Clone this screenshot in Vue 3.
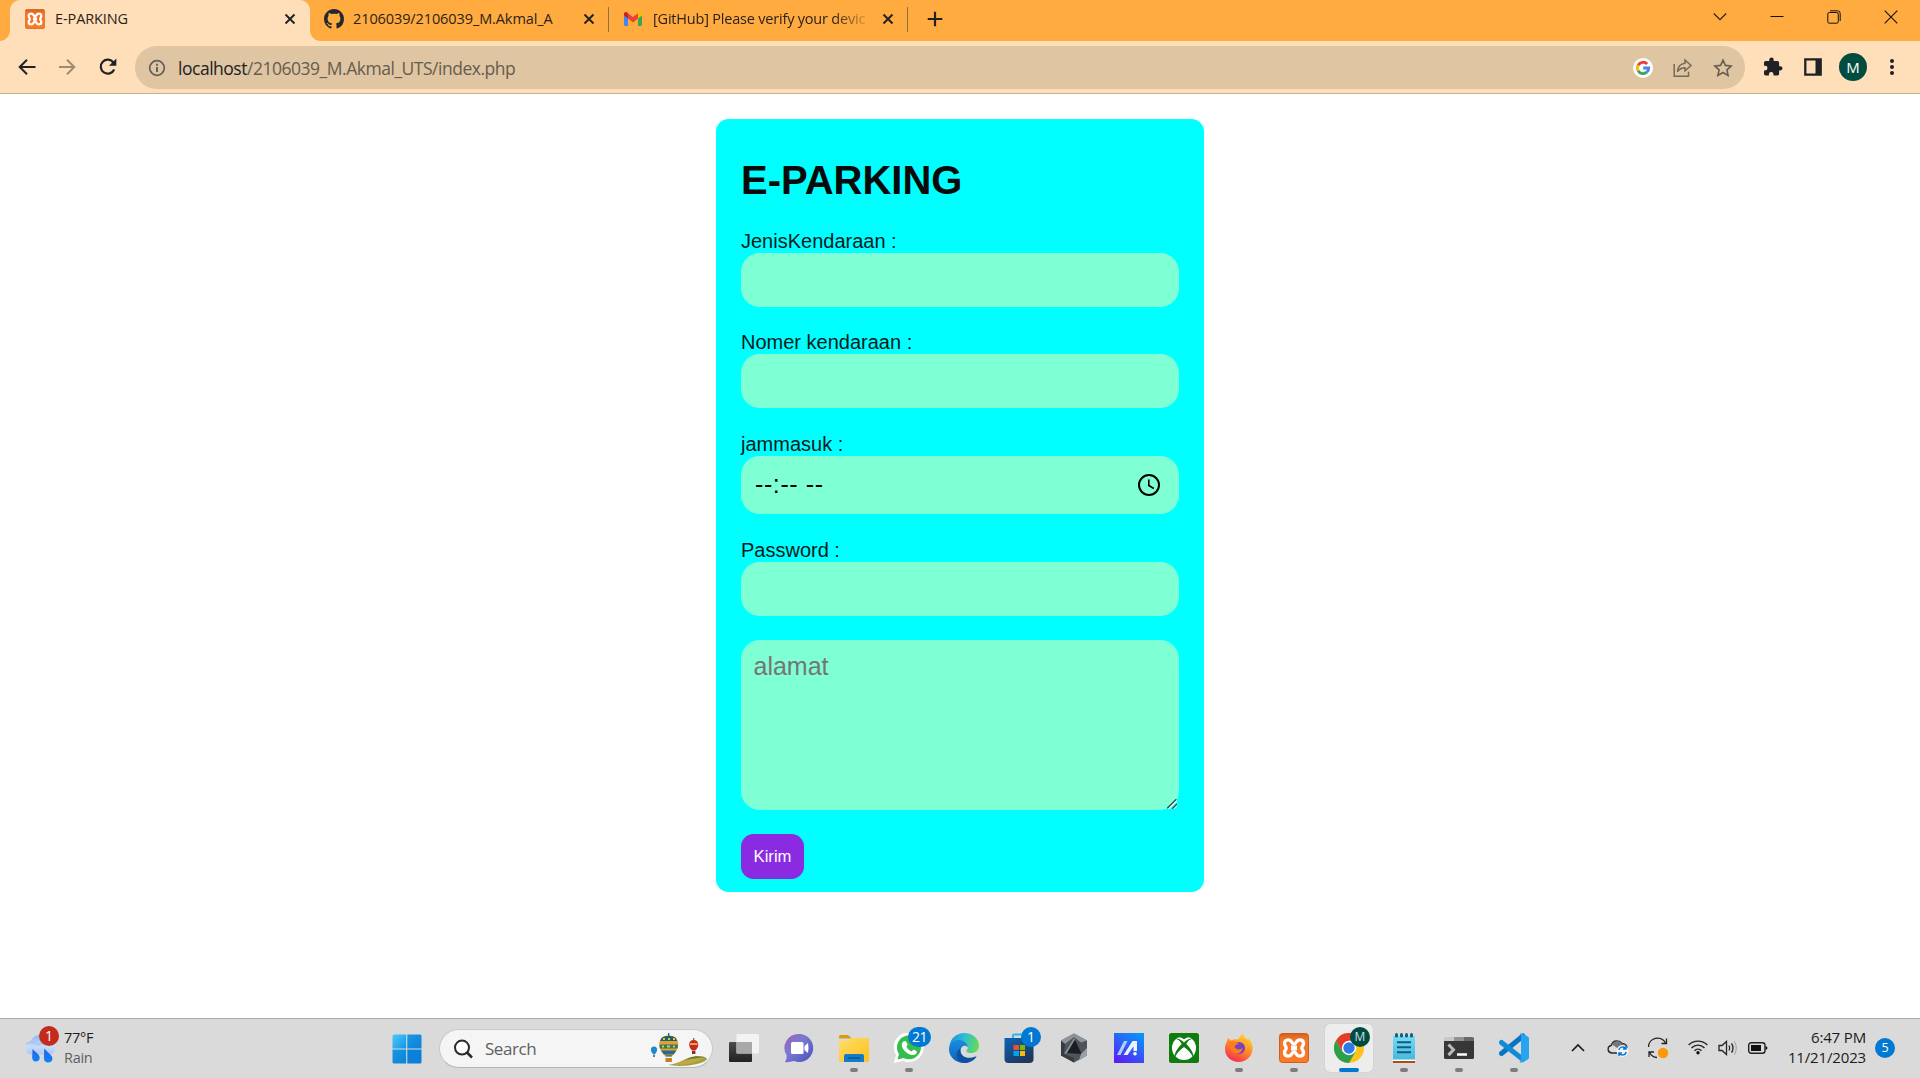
<script setup>
const tabs = [
  { id: 'xampp', title: 'E-PARKING', cls: 't1' },
  { id: 'github', title: '2106039/2106039_M.Akmal_A', cls: 't2' },
  { id: 'gmail', title: '[GitHub] Please verify your devic', cls: 't3' },
]
const fields = [
  { label: 'JenisKendaraan :', type: 'text', cls: 'f1' },
  { label: 'Nomer kendaraan :', type: 'text', cls: 'f2' },
  { label: 'jammasuk :', type: 'time', cls: 'f3' },
  { label: 'Password :', type: 'password', cls: 'f4' },
]
</script>

<template>
  <div class="screen">
    <svg width="0" height="0" class="defs">
      <defs>
        <linearGradient id="orange" x1="0" y1="0" x2="0" y2="1"><stop offset="0" stop-color="#d4601d" /><stop offset=".2" stop-color="#f0762b" /><stop offset="1" stop-color="#fb7a24" /></linearGradient>
        <symbol id="xampp" viewBox="0 0 30 30">
          <rect x=".5" y=".5" width="29" height="29" rx="3" fill="url(#orange)" stroke="#c9601f" />
          <path d="M9.500 6.800c-2.700 0-4 1.700-4 3.700 0 2.200 1.700 2.700 1.700 4.500s-1.700 2.300-1.700 4.500c0 2 1.300 3.700 4 3.700 3.500 0 3-4.200 5.500-4.200s2 4.200 5.500 4.200c2.700 0 4-1.700 4-3.700 0-2.200-1.700-2.700-1.700-4.500s1.700-2.300 1.700-4.500c0-2-1.300-3.700-4-3.700-3.500 0-3 4.200-5.500 4.200s-2-4.200-5.500-4.200z" fill="none" stroke="#fff" stroke-width="3.300" stroke-linejoin="round" />
          <path d="M12 15h6" stroke="#fff" stroke-width="5" />
        </symbol>
        <symbol id="github" viewBox="0 0 16 16"><path fill="#24292f" d="M8 0C3.580 0 0 3.580 0 8c0 3.540 2.290 6.530 5.470 7.590.4.070.55-.17.55-.38 0-.19-.010-.82-.010-1.490-2.010.37-2.530-.49-2.690-.94-.090-.23-.48-.94-.82-1.130-.28-.15-.68-.52-.010-.53.63-.010 1.080.58 1.230.82.72 1.210 1.870.87 2.330.66.070-.52.28-.87.510-1.070-1.780-.2-3.640-.89-3.640-3.950 0-.87.31-1.590.82-2.150-.080-.2-.36-1.020.080-2.120 0 0 .67-.21 2.200.82.640-.18 1.320-.27 2-.27s1.360.090 2 .27c1.530-1.040 2.200-.82 2.200-.82.440 1.100.160 1.920.080 2.120.510.56.82 1.270.82 2.150 0 3.070-1.870 3.750-3.650 3.950.290.25.540.73.540 1.480 0 1.070-.010 1.930-.010 2.200 0 .210.150.460.550.380A8.010 8.010 0 0 0 16 8c0-4.420-3.580-8-8-8z" /></symbol>
        <symbol id="gmail" viewBox="0 0 20 20">
          <path d="M1 6v9.500Q1 17 2.500 17H5V9z" fill="#4285f4" /><path d="M15 9v8h2.500q1.500 0 1.500-1.500V6z" fill="#34a853" />
          <path d="M15 4.500V9.600L19 6.600V5c0-2-2.200-2.600-3.500-1.600z" fill="#fbbc04" /><path d="M5 9.600V4.200l5 3.800 5-3.800v5.400l-5 3.800z" fill="#ea4335" /><path d="M1 5v1.600l4 3V4.200l-.7-.6C3 2.500 1 3.200 1 5z" fill="#c5221f" />
        </symbol>
      </defs>
    </svg>

    <header class="strip">
      <div v-for="t in tabs" :key="t.id" class="tab" :class="t.cls">
        <svg class="fav" width="20" height="20"><use :href="'#' + t.id" /></svg>
        <span class="title">{{ t.title }}</span>
        <svg class="x" width="12" height="12" viewBox="0 0 12 12"><path d="M1.500 1.500l9 9M10.500 1.500l-9 9" stroke="#202124" stroke-width="1.900" /></svg>
      </div>
      <svg class="plus" width="16" height="16" viewBox="0 0 16 16"><path d="M8 .7v14.600M.7 8h14.600" stroke="#202124" stroke-width="2.200" /></svg>
      <div class="winbtns">
        <svg width="14" height="14" viewBox="0 0 14 14"><path d="M.8 3.500l6.200 6.200 6.200-6.200" fill="none" stroke="#2b2010" stroke-width="1.100" /></svg>
        <svg width="14" height="14" viewBox="0 0 14 14"><path d="M.5 6.500h13" stroke="#111" /></svg>
        <svg width="14" height="14" viewBox="0 0 14 14"><g fill="none" stroke="#111"><rect x=".8" y="2.500" width="10.500" height="10.700" rx="1.500" /><path d="M3 .8h7.500q2.700 0 2.700 2.700v7.500" /></g></svg>
        <svg width="14" height="14" viewBox="0 0 14 14"><path d="M.7.7l12.600 12.600M13.300.7L.7 13.300" stroke="#111" stroke-width="1.100" /></svg>
      </div>
    </header>

    <nav class="toolbar">
      <svg class="nav" width="20" height="20" viewBox="0 0 20 20"><path d="M18.500 10H3M10 2.700L2.700 10l7.300 7.300" fill="none" stroke="#202124" stroke-width="2" /></svg>
      <svg class="nav" width="20" height="20" viewBox="0 0 20 20"><path d="M2 10h15M10 2.700l7.300 7.300-7.300 7.300" fill="none" stroke="#a08b72" stroke-width="2" /></svg>
      <svg class="nav" width="20" height="20" viewBox="0 0 20 20"><path d="M16.200 12.500A7 7 0 1 1 15.500 5.600" fill="none" stroke="#202124" stroke-width="2.200" /><path d="M18.300 1.600v7.200H11z" fill="#202124" /></svg>
      <div class="omni">
        <svg class="info" width="18" height="18" viewBox="0 0 18 18"><circle cx="9" cy="9" r="7.300" fill="none" stroke="#5f5f60" stroke-width="1.700" /><path d="M9 8v5M9 4.800v1.900" stroke="#5f5f60" stroke-width="1.900" /></svg>
        <span class="url"><b>localhost</b>/2106039_M.Akmal_UTS/index.php</span>
        <svg class="goog" width="20" height="20" viewBox="0 0 20 20"><circle cx="10" cy="10" r="10" fill="#fff" /><g fill="none" stroke-width="2.900"><path d="M14.200 6.100A5.700 5.700 0 0 0 5.100 7.200" stroke="#ea4335" /><path d="M5.100 7.200a5.700 5.700 0 0 0 0 5.600" stroke="#fbbc05" /><path d="M5.100 12.800a5.700 5.700 0 0 0 8.700 1.400" stroke="#34a853" /><path d="M13.800 14.200A5.700 5.700 0 0 0 15.700 10H10.200" stroke="#4285f4" /></g></svg>
        <svg class="share" width="20" height="20" viewBox="0 0 20 20"><g fill="none" stroke="#75695a" stroke-width="1.500"><path d="M1.200 6v12.200h14.300v-4.500" /><path d="M12 2l6 5.500-6 5.300V9.700c-3.500 0-5.600 1-7.500 4C4.800 9 7.300 5.700 12 5.200z" /></g></svg>
        <svg class="star" width="20" height="20" viewBox="0 0 20 20"><path d="M10 2.200l2.400 5.200 5.700.6-4.200 3.800 1.200 5.600-5.100-2.900-5.100 2.900 1.200-5.600L1.900 8l5.700-.6z" fill="none" stroke="#665e53" stroke-width="1.600" /></svg>
      </div>
      <svg class="puzzle" width="20" height="20" viewBox="0 0 20 20"><path fill="#202124" d="M17.400 9.200h-1.300V5.600c0-.9-.7-1.700-1.700-1.700h-3.700V2.700a2.200 2.200 0 0 0-4.400 0v1.200H2.700C1.800 3.900 1 4.700 1 5.600v3.200h1.200a2.300 2.300 0 0 1 0 4.600H1v3.400c0 .9.800 1.700 1.700 1.700h3.200v-1.200a2.300 2.300 0 0 1 4.600 0v1.200h3.900c1 0 1.700-.8 1.700-1.700v-3.400h1.300a2.100 2.100 0 0 0 0-4.200z" /></svg>
      <svg class="panel" width="18" height="18" viewBox="0 0 18 18"><path d="M1.300 1.300h15.400v15.400H1.300z" fill="none" stroke="#202124" stroke-width="2.300" /><path d="M11.500 1H17v16h-5.500z" fill="#202124" /></svg>
      <span class="avatar">M</span>
      <svg class="dots" width="6" height="18" viewBox="0 0 6 18"><circle cx="3" cy="3" r="2" /><circle cx="3" cy="9" r="2" /><circle cx="3" cy="15" r="2" /></svg>
    </nav>

    <main class="page">
      <form class="card" @submit.prevent>
        <h1>E-PARKING</h1>
        <div v-for="f in fields" :key="f.label" class="field" :class="f.cls">
          <label>{{ f.label }}</label>
          <div v-if="f.type === 'time'" class="input time">
            <span>--:-- --</span>
            <svg width="24" height="24" viewBox="0 0 24 24"><circle cx="12" cy="12" r="10" fill="none" stroke="#000" stroke-width="2" /><path d="M11.800 6.500v6l5 3" fill="none" stroke="#000" stroke-width="1.600" /></svg>
          </div>
          <input v-else class="input" :type="f.type" />
        </div>
        <div class="area">
          <textarea placeholder="alamat"></textarea>
          <svg class="grip" width="10" height="10" viewBox="0 0 10 10"><path d="M1.500 10L10 1.500M6.500 10L10 6.500" stroke="#fff" stroke-width="1.300" /><path d="M.3 9.300L9.300.3M5.300 9.700L10 5" stroke="#2f4f45" stroke-width="1.400" /></svg>
        </div>
        <button>Kirim</button>
      </form>
    </main>

    <footer class="taskbar">
      <div class="weather">
        <svg width="32" height="30" viewBox="0 0 32 30">
          <defs>
            <linearGradient id="cl" x1="0" y1="0" x2="0" y2="1"><stop offset="0" stop-color="#8fb5f5" /><stop offset=".6" stop-color="#c8dcfb" /><stop offset="1" stop-color="#a9c6f5" /></linearGradient>
            <linearGradient id="dr" x1="0" y1="0" x2="0" y2="1"><stop offset="0" stop-color="#2b62dd" /><stop offset="1" stop-color="#0a84ff" /></linearGradient>
          </defs>
          <path d="M7 20.500a6.200 6.200 0 0 1-1-12C8 3 12 1 16 1c5 0 8 4 8.500 8 4 0 6.500 2.500 6.500 5.700s-2 5.800-5.500 5.800z" fill="url(#cl)" />
          <path d="M2 10c4-3 8-2 12 1 4-3 11-2 15-.5" stroke="#9dbcf3" fill="none" />
          <path d="M8.500 15l5.800 5.500c3 3.500.7 7-2.500 7-2.500 0-3.700-1.800-3.600-4.200zM20.200 14.500l7 7c2.800 3.500.6 7-3 7-2.700 0-4.300-1.800-4.300-4.300z" fill="url(#dr)" />
        </svg>
        <span class="badge red">1</span>
        <div class="wtext"><div>77°F</div><div class="dim">Rain</div></div>
      </div>
      <svg class="start" width="30" height="30" viewBox="0 0 30 30"><defs><linearGradient id="win" x1="0" y1="0" x2="1" y2="1"><stop offset="0" stop-color="#4cc9fc" /><stop offset="1" stop-color="#1495e2" /></linearGradient><linearGradient id="win2" x1="0" y1="0" x2="1" y2="1"><stop offset="0" stop-color="#22a1e8" /><stop offset="1" stop-color="#0279d4" /></linearGradient></defs><path d="M.5 2Q.5.500 2 .5h12.200v14H.5z" fill="url(#win)" /><path d="M15.300.5H28q1.500 0 1.500 1.500v12.500H15.300zM.5 15.500h13.700v14H2q-1.500 0-1.500-1.500z" fill="url(#win2)" /><path d="M15.300 15.500h14.200V28q0 1.500-1.500 1.500H15.300z" fill="#0a80d8" /></svg>
      <div class="search">
        <svg width="20" height="20" viewBox="0 0 20 20"><circle cx="9" cy="8.600" r="7" fill="#fff" stroke="#292929" stroke-width="2" /><path d="M14 13.500l5 5" stroke="#292929" stroke-width="2.500" /></svg>
        <span>Search</span>
        <svg class="art" width="58" height="34" viewBox="0 0 58 34">
          <path d="M18 32c12-1 18-8 28-9 6 0 11 1 11 3-2 4-16 7-28 7z" fill="#9ba044" /><path d="M26 31c8-3 13-6 29-6-8 4-16 7-29 7z" fill="#c9a53f" /><path d="M35 27c6-4 12-4 20-3-8 1-12 1-20 3z" fill="#567b35" />
          <path d="M4 13.500c4 0 4 5 .8 7.500H3.200C0 18.500 0 13.500 4 13.500z" fill="#1e88c9" /><path d="M3.200 21.500h1.600V24H3.200z" fill="#1d70a5" />
          <path d="M18.700 2.500c12 0 12 14 3.300 20.500h-6.600C6.700 16.500 6.700 2.500 18.700 2.500z" fill="#e7a12a" /><path d="M12 4.500q6.700-3.500 13.400 0l2 3.500H10z" fill="#17617b" /><path d="M9.500 11.500h18.400l-.3 4H9.800z" fill="#297b6b" /><path d="M11 17.500h15.400l-3 4h-9.400z" fill="#1b6e97" /><path d="M12 13.500h2m3 0h3m3 0h2M13 6h2m3 0h2m3 0h2" stroke="#f3c02e" stroke-width="2" /><path d="M18.700 0v3M15.500 23h6.400M16 26h5.500" stroke="#164b5c" stroke-width="1.200" /><path d="M15.500 25h6.400v4h-6.400z" fill="#c77e21" />
          <path d="M43.700 7c6 0 5.500 7 1.700 10.500h-3.400C38.200 14 37.700 7 43.700 7z" fill="#c22c27" /><path d="M40 11h7.500" stroke="#f0a32d" stroke-width="2" /><path d="M42 18h3.400v3H42z" fill="#8a2b25" /><path d="M43.700 5v2" stroke="#8a2b25" />
        </svg>
      </div>

      <div class="apps">
        <div class="app"><svg viewBox="0 0 30 30"><defs><linearGradient id="tv" x1="0" y1="0" x2="0" y2="1"><stop offset="0" stop-color="#4a4a4a" /><stop offset="1" stop-color="#222" /></linearGradient></defs><rect x="0" y="9" width="23" height="20" rx="1" fill="url(#tv)" /><rect x="7.500" y="1" width="22.500" height="19.500" rx="1" fill="#f5f5f5" fill-opacity=".9" /><path d="M7.500 9H23v11.500H7.500z" fill="#a8a8a8" /></svg></div>
        <div class="app"><svg viewBox="0 0 30 30"><defs><linearGradient id="ch" x1="0" y1="0" x2="1" y2="1"><stop offset="0" stop-color="#9b61b0" /><stop offset=".4" stop-color="#7d79d2" /><stop offset="1" stop-color="#4650bd" /></linearGradient></defs><path d="M15 1a14 14 0 1 1-5 27q-5 1.500-9 1 1.800-2.500 1.700-6.500A14 14 0 0 1 15 1z" fill="url(#ch)" /><rect x="7" y="9" width="12.500" height="12" rx="1.500" fill="#fff" /><path d="M20.500 13l3.500-3q1 5 0 10l-3.500-3z" fill="#fff" /></svg></div>
        <div class="app run"><svg viewBox="0 0 30 30"><defs><linearGradient id="fo" x1="0" y1="0" x2="1" y2="1"><stop offset="0" stop-color="#ffdd68" /><stop offset="1" stop-color="#ffc01f" /></linearGradient></defs><path d="M0 4q0-2 1.500-2H9l4 3.500H0z" fill="#dc9a12" /><path d="M0 7.500h9L13 5h16q1 0 1 1v22.800H0z" fill="url(#fo)" /><path d="M5 29v-6q0-2 2-2h16q2 0 2 2v6z" fill="#137bc8" /><path d="M8.500 25h13" stroke="#095292" stroke-width="1.300" /></svg></div>
        <div class="app run"><svg viewBox="0 0 30 30"><path d="M0 30l2-8A15 15 0 1 1 9 28z" fill="#fff" /><path d="M3.500 26.500L5 21A12 12 0 1 1 9.500 25z" fill="#35bd4d" /><path d="M9.500 8.500c2-1.500 3 0 4 3 .3 1-1.500 1.700-1 2.500 1.200 2.200 2.500 3.300 4.700 4.300 1 .4 1.700-2 2.700-1.600 2.600 1 3.600 1.700 2.700 3.300-1.300 2.300-4 2.700-7.300 1.200-4.200-2-7.800-6.300-7.500-9.500.1-1.500.8-2.600 1.700-3.200z" fill="#fff" /></svg><span class="badge wide">21</span></div>
        <div class="app"><svg viewBox="0 0 30 30"><defs><linearGradient id="e1" x1="0" y1=".3" x2="1" y2=".5"><stop offset="0" stop-color="#1b91de" /><stop offset=".5" stop-color="#31bfd0" /><stop offset="1" stop-color="#67db53" /></linearGradient><linearGradient id="e2" x1="0" y1="0" x2="0" y2="1"><stop offset="0" stop-color="#188cdd" /><stop offset="1" stop-color="#0a62bd" /></linearGradient></defs><path d="M.5 13C1.500 5 8 0 15 0c9 0 15 6 15 12.500 0 5-3.500 7.500-8 7.500-4 0-5-1.500-4.500-2.500 1-1 1.500-2 1.200-4C18 8 7 4 .5 13z" fill="url(#e1)" /><path d="M.2 14C2 7 10 5.500 15 8.500c3 1.700 4 4 3.700 6-1.500-3-6.500-2-7 2-.7 6 5 11 13 8.500C20 30.500 14 30.500 11 29.500 3 27-.8 21 .2 14z" fill="url(#e2)" /><path d="M11.500 15c-2 7 5.500 11.500 12.500 9.300 2-.8 3.500-1.300 3.500-.5-3 4.500-8 6.700-12.500 6.200C6 29 5.500 19 11.500 15z" fill="#11529d" /></svg></div>
        <div class="app"><svg viewBox="0 0 30 30"><defs><linearGradient id="st" x1="0" y1="0" x2=".6" y2="1"><stop offset="0" stop-color="#0b66b8" /><stop offset="1" stop-color="#20365d" /></linearGradient></defs><path d="M9 6V2.500Q9 1.500 10 1.500h10q1 0 1 1V6" fill="none" stroke="#29b8ea" stroke-width="2" /><path d="M.5 5h29v21q0 4-4 4h-21q-4 0-4-4z" fill="url(#st)" /><path d="M9.500 12H15v5H9.500z" fill="#f25022" /><path d="M16 12h5v5h-5z" fill="#7fba00" /><path d="M9.500 18H15v5H9.500z" fill="#00a4ef" /><path d="M16 18h5v5h-5z" fill="#ffb900" /></svg><span class="badge one">1</span></div>
        <div class="app"><svg viewBox="0 0 30 30"><path d="M15 .5l13 7v15l-13 7-13-7v-15z" fill="#4e545b" /><path d="M15 .5l13 7-6 2-7-5.500L6 11 2 7.500z" fill="#8d949b" /><path d="M2 8l4 3-1 10 10 4v4.500l-13-7z" fill="#363c42" /><path d="M15 5L5 21l6.500-2L17 8z" fill="#8a9096" /><path d="M16 6.500L22.500 21 8 20z" fill="#1a1d21" /><path d="M22 21l6-6v7.500l-8 5z" fill="#9ba0a5" /></svg></div>
        <div class="app"><svg viewBox="0 0 30 30"><defs><linearGradient id="ma" x1=".8" y1="0" x2=".2" y2="1"><stop offset="0" stop-color="#0894fa" /><stop offset="1" stop-color="#5a20f5" /></linearGradient></defs><path d="M0 0h30v30H0z" fill="url(#ma)" /><path d="M3 22L10 8h3.500L6.500 22z" fill="#a9d2ff" /><path d="M9.500 22l9-14H23v10h-3.500v-4.700L13.500 22z" fill="#eef3ff" /><circle cx="21" cy="20.700" r="1.800" fill="#fff" /></svg></div>
        <div class="app"><svg viewBox="0 0 30 30"><rect width="30" height="30" rx="2.500" fill="#107c10" /><circle cx="15" cy="15" r="12" fill="#fff" /><path d="M6.500 6C10 5 12.500 7.300 15 9.400 17.500 7.300 20 5 23.500 6c-2.500-.4-4.500 2-6.200 5 4 4 8 9.500 6.700 13.500C22.500 20.500 19 16.500 15 14c-4 2.500-7.500 6.500-9 10.500C4.700 20.500 8.700 15 12.700 11 11 8 9 5.600 6.500 6z" fill="#107c10" /><path d="M9 4.300q3-.3 6 2 3-2.300 6-2Q15 .8 9 4.300z" fill="#107c10" /></svg></div>
        <div class="app run"><svg viewBox="0 0 30 30"><defs><linearGradient id="ff" x1=".8" y1="0" x2=".3" y2="1"><stop offset="0" stop-color="#ffe02f" /><stop offset=".5" stop-color="#ff8b25" /><stop offset="1" stop-color="#f22c55" /></linearGradient></defs><path d="M4 5l3 2.500c2.500-1.500 5-1.500 7-1L18 .5c1.500 3 4 4 5 6.500l1-2c4 4 5 8 4.500 12A13.800 13.800 0 0 1 15 29C7 29 1 23.500 1 16 1 11 3 9 4 5z" fill="url(#ff)" /><circle cx="15" cy="15" r="6" fill="#7542c6" /><path d="M5 9c5-2 8 0 10 2-3 0-4 1.500-4.500 3 2 3 6 3 8 1-1 7-9 7-11.500 2z" fill="#ff7b20" /><path d="M17 9c3 0 5 3 4.500 7 2-4 1-8-1-10z" fill="#ffad25" /></svg></div>
        <div class="app run"><svg viewBox="0 0 30 30"><use href="#xampp" /></svg></div>
        <div class="app run active"><svg viewBox="0 0 30 30"><circle cx="15" cy="15" r="15" fill="#fcc31e" /><path d="M2 7.500A15 15 0 0 1 28 7.500H15L8.500 18.800z" fill="#e33b2e" /><path d="M2 7.500L8.500 18.800 21.500 18.800 15 30A15 15 0 0 1 2 7.500z" fill="#2da04b" /><circle cx="15" cy="15" r="7.200" fill="#fff" /><circle cx="15" cy="15" r="5.700" fill="#2f78e8" /></svg><span class="badge prof">M</span></div>
        <div class="app run"><svg viewBox="0 0 30 30"><path d="M4 25h22v5H4z" fill="#a9500c" /><path d="M4 25.500h22V28H4z" fill="#fff" /><defs><linearGradient id="np" x1="0" y1="0" x2="0" y2="1"><stop offset="0" stop-color="#77dcf3" /><stop offset="1" stop-color="#45b9e0" /></linearGradient></defs><path d="M4 3h22v23.500H4z" fill="url(#np)" /><path d="M8 9.300h14M8 14.300h14M8 19.300h14" stroke="#105d80" stroke-width="1.900" /><g fill="#155d7c"><rect x="6" y="0" width="3" height="4.500" rx="1.500" /><rect x="11" y="0" width="3" height="4.500" rx="1.500" /><rect x="16" y="0" width="3" height="4.500" rx="1.500" /><rect x="21" y="0" width="3" height="4.500" rx="1.500" /></g></svg></div>
        <div class="app run"><svg viewBox="0 0 30 30"><path d="M0 8h30v16.500q0 1.500-1.500 1.500h-27Q0 26 0 24.500z" fill="#373737" /><path d="M0 8V5.500Q0 4 1.500 4H10v4z" fill="#c8c8c8" /><path d="M10 4h10v4H10z" fill="#929292" /><path d="M20 4h8.500Q30 4 30 5.500V8H20z" fill="#686868" /><path d="M4.500 11.500l5 5.300-5 5.300" fill="none" stroke="#bbb" stroke-width="3" /><path d="M13 21.500h10" stroke="#fff" stroke-width="2.500" /></svg></div>
        <div class="app run"><svg viewBox="0 0 30 30"><path d="M2.500 20.500L24 3" stroke="#0875c2" stroke-width="5" stroke-linecap="round" /><path d="M2.500 9.500L24 26.500" stroke="#128bd6" stroke-width="5" stroke-linecap="round" /><path d="M22 .3l6.500 3Q30 4 30 5.500v19q0 1.500-1.500 2.200L22 29.800q-1 0-1.500-1l1.500-.8V2l-1.500-.8z" fill="#28a3ef" /></svg></div>
      </div>

      <div class="tray">
        <svg class="up" width="14" height="10" viewBox="0 0 14 10"><path d="M1 8l6-6 6 6" fill="none" stroke="#1b1b1b" stroke-width="1.700" /></svg>
        <svg class="cloud" width="22" height="18" viewBox="0 0 22 18"><path d="M4.500 14a3.800 3.800 0 0 1-.3-7.500A6 6 0 0 1 15 4.500c3 0 5 2 5 4.500s-2 5-4 5z" fill="#ddd" stroke="#2d2d2d" stroke-width="1.400" /><path d="M5 6c2-4.500 8-5 10-1 3 0 4 2 4 4-3-1-5-1-8 1C9 8 7 6.500 5 6z" fill="#777" /><circle cx="15.500" cy="12" r="6" fill="#eef5fb" /><path d="M11.700 11a4 4 0 0 1 7-1.500M19.300 13a4 4 0 0 1-7 1.500M19 7v3h-3M12 17v-3h3" fill="none" stroke="#0875cb" stroke-width="1.400" /></svg>
        <svg class="sync" width="22" height="22" viewBox="0 0 22 22"><path d="M1.500 10A9 9 0 0 1 18.500 6M19.500 1.500v5h-5M10 20.500a9 9 0 0 1-7.500-5M2 20v-5h5" fill="none" stroke="#222" stroke-width="1.300" /><circle cx="16" cy="16" r="5.200" fill="#ff9808" /></svg>
        <svg class="wifi" width="20" height="16" viewBox="0 0 20 16"><g fill="none" stroke="#222" stroke-width="1.400"><path d="M.7 6a13 13 0 0 1 18.600 0M3.500 8.900a9 9 0 0 1 13 0M6.500 11.700a5 5 0 0 1 7 0" /></g><circle cx="10" cy="13.700" r="1.700" fill="#111" /></svg>
        <svg class="sound" width="20" height="16" viewBox="0 0 20 16"><path d="M1 5.500h3l4.500-4v13l-4.500-4H1z" fill="none" stroke="#222" stroke-width="1.300" /><path d="M11 5.500q1.500 2.500 0 5M13.500 3.300q3 4.700 0 9.400" fill="none" stroke="#222" stroke-width="1.300" /><path d="M16.200 1.300q4.200 6.700 0 13.400" fill="none" stroke="#aaa" stroke-width="1.200" /></svg>
        <svg class="batt" width="20" height="12" viewBox="0 0 20 12"><rect x=".7" y=".7" width="16.300" height="10.600" rx="2.500" fill="none" stroke="#222" stroke-width="1.400" /><path d="M3 3h10v6H3z" fill="#111" /><path d="M17.500 4.200q2 0 2 1.800t-2 1.800z" fill="#111" /></svg>
        <div class="clock"><div>6:47 PM</div><div>11/21/2023</div></div>
        <span class="count">5</span>
      </div>
    </footer>
  </div>
</template>

<style>
body { margin: 0; overflow: hidden; }
</style>

<style scoped>
* { box-sizing: border-box; }
svg { display: block; flex: none; }
.defs { position: absolute; }
.screen { width: 1920px; height: 1078px; display: flex; flex-direction: column; background: #fff; font-family: "Open Sans", "Noto Sans", sans-serif; overflow: hidden; }
.strip { height: 41px; flex: none; background: #ffab40; display: flex; padding-left: 10px; }
.tab { position: relative; height: 41px; display: flex; align-items: flex-start; flex: none; white-space: nowrap; font-size: 14.500px; color: #2c2216; }
.fav { margin-top: 9px; }
.title { margin: 9px 0 0 10px; line-height: 20px; overflow: hidden; flex: none; }
.x { margin-top: 13px; }
.t1 { width: 300px; background: #ffdfb9; border-radius: 10px 10px 0 0; padding-left: 15px; }
.t1::before, .t1::after { content: ""; position: absolute; bottom: 0; width: 10px; height: 10px; }
.t1::before { left: -10px; background: radial-gradient(circle at 0 0, #ffab40 9.500px, #ffdfb9 10px); }
.t1::after { right: -10px; background: radial-gradient(circle at 100% 0, #ffab40 9.500px, #ffdfb9 10px); }
.t1 .title { width: 229px; letter-spacing: -.1px; }
.t2 { width: 299px; padding-left: 14px; }
.t2 .title { width: 229px; letter-spacing: -.1px; margin-left: 9px; }
.t2 .x { margin-left: 1px; }
.t3 { width: 299px; padding-left: 14px; }
.t3 .title { width: 215px; margin-right: 14px; letter-spacing: -.2px; -webkit-mask-image: linear-gradient(90deg, #000 84%, transparent 102%); mask-image: linear-gradient(90deg, #000 84%, transparent 102%); }
.t2::after, .t3::after { content: ""; position: absolute; right: 0; top: 7px; width: 1px; height: 25px; background: #96703c; }
.plus { margin: 11px 0 0 19px; }
.winbtns { margin: 10px 22px 0 auto; display: flex; gap: 43px; }
.toolbar { height: 53px; flex: none; background: #ffdfb9; border-bottom: 1px solid #c8af93; display: flex; align-items: center; padding-left: 17px; }
.nav { margin-right: 20px; margin-bottom: 1px; }
.toolbar .nav:nth-child(3) { margin-right: 17px; margin-left: 1px; }
.omni { width: 1610px; height: 43px; border-radius: 22px; background: #dfc5a2; display: flex; align-items: center; padding-left: 13px; flex: none; margin-top: 1px; }
.url { margin-left: 12px; width: 1455px; font-size: 17.500px; color: #675c4f; white-space: nowrap; letter-spacing: -.48px; line-height: 24px; }
.url b { font-weight: 400; color: #202124; }
.share { margin-left: 20px; }
.star { margin-left: 20px; }
.puzzle { margin-left: 18px; }
.panel { margin-left: 21px; }
.avatar { width: 28px; height: 28px; border-radius: 50%; background: #004d40; color: #fff; font-size: 15px; line-height: 28px; text-align: center; margin-left: 17px; flex: none; }
.dots { margin-left: 22px; fill: #202124; }
.page { flex: 1; display: flex; justify-content: center; align-items: flex-start; padding-top: 25px; font-family: "Liberation Sans", Arial, sans-serif; }
.card { width: 488px; height: 773px; background: #0ff; border-radius: 12.500px; padding: 39px 25px 0; display: flex; flex-direction: column; }
h1 { margin: 0 0 27px; font-size: 40px; line-height: 45px; font-weight: 700; color: #0a0a0a; }
.field { margin-bottom: 24px; display: flex; flex-direction: column; }
.f2, .f3 { margin-bottom: 25px; }
label { font-size: 20px; line-height: 23px; color: #0a1a1a; }
.input { width: 438px; height: 54px; border: 0; border-radius: 18.750px; background: #7fffd4; padding: 12.500px; outline: 0; }
.time { height: 58px; display: flex; align-items: center; justify-content: space-between; padding: 0 18px 0 14px; font-size: 25px; color: #000; letter-spacing: .6px; }
.time span { margin-bottom: 2px; }
.area { position: relative; height: 170px; margin-bottom: 24px; }
textarea { display: block; width: 438px; height: 170px; border: 0; border-radius: 18.750px; background: #7fffd4; padding: 11.500px 12.500px; font: 25px "Liberation Sans", Arial, sans-serif; resize: none; outline: 0; }
textarea::placeholder { color: #757575; }
.grip { position: absolute; right: 2px; bottom: 1px; }
button { width: 63px; height: 45px; border: 0; border-radius: 12.500px; background: #8a2be2; color: #fff; font: 16.670px "Liberation Sans", Arial, sans-serif; padding: 0; }
.taskbar { height: 60px; flex: none; border-top: 1px solid #ababab; background: #dadada; display: flex; align-items: flex-start; color: #1b1b1b; }
.weather { position: relative; width: 368px; margin-left: 24px; display: flex; padding-top: 15px; }
.wtext { margin: -6px 0 0 8px; font-size: 14.500px; line-height: 20px; letter-spacing: -.3px; }
.dim { color: #5f5f5f; }
.badge { position: absolute; height: 20px; min-width: 20px; border-radius: 10px; color: #fff; text-align: center; font-size: 14px; line-height: 20px; background: #0078d4; }
.red { left: 15px; top: 7px; background: #c42b1c; }
.start { margin-top: 15px; }
.search { width: 274px; height: 39px; margin: 10px 0 0 17px; border-radius: 20px; background: #f5f5f5; border: 1px solid #c9c9c9; border-bottom-color: #b5b5b5; display: flex; align-items: center; padding-left: 13px; font-size: 17px; color: #606060; flex: none; }
.search span { margin-left: 12px; width: 165px; letter-spacing: -.45px; }
.art { margin-top: 2px; }
.apps { display: flex; margin-left: 3px; }
.app { position: relative; width: 55px; height: 59px; display: flex; justify-content: center; padding-top: 14px; flex: none; }
.app > svg { width: 30px; height: 30px; position: relative; }
.run::after { content: ""; position: absolute; left: 23.500px; top: 49px; width: 8px; height: 4px; border-radius: 2px; background: #7d7d7d; }
.active::before { content: ""; position: absolute; left: 3.500px; top: 5px; width: 48px; height: 48px; border-radius: 5px; background: #ededed; box-shadow: 0 0 1px #aaa; }
.active::after { width: 20px; left: 17.500px; background: #0078d4; }
.wide { left: 27px; top: 8px; width: 23px; letter-spacing: -.4px; }
.one { left: 30px; top: 8px; }
.prof { left: 29px; top: 8px; background: #004d40; font-size: 12px; color: #cde; }
.tray { display: flex; align-items: flex-start; margin-left: 30px; }
.up { margin-top: 24px; }
.cloud { margin: 20px 0 0 22px; }
.sync { margin: 18px 0 0 18px; }
.wifi { margin: 20px 0 0 19px; }
.sound { margin: 21px 0 0 10px; }
.batt { margin: 23px 0 0 10px; }
.clock { margin: 8px 0 0 14px; width: 84px; text-align: right; font-size: 15px; line-height: 20px; letter-spacing: -.15px; white-space: nowrap; }
.count { width: 20px; height: 20px; margin: 19px 0 0 9px; border-radius: 50%; background: #0078d4; color: #fff; text-align: center; font-size: 12.500px; line-height: 20px; }
</style>
